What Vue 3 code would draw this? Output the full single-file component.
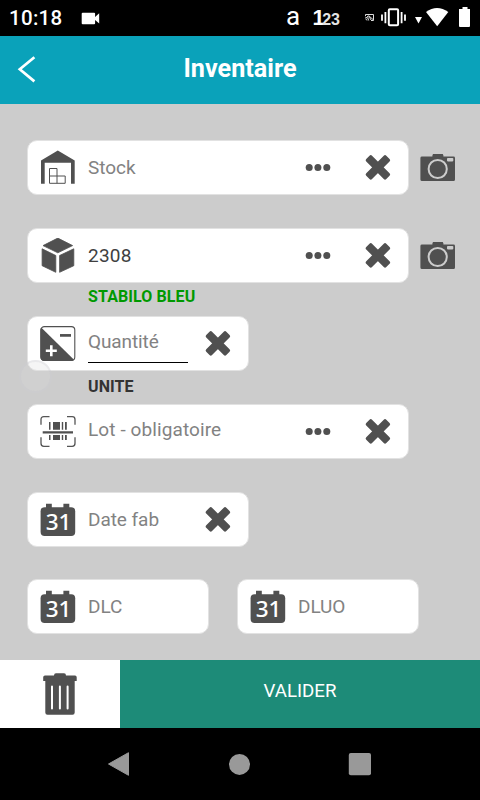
<script setup>
const rows = [
  { id: 'stock', fields: [{ icon: 'stock', text: 'Stock', size: 'wide', dots: true, clear: true }], camera: true },
  { id: 'article', fields: [{ icon: 'cube', text: '2308', filled: true, size: 'wide', dots: true, clear: true }], camera: true, note: 'STABILO BLEU', green: true },
  { id: 'quantity', fields: [{ icon: 'quantity', text: 'Quantité', size: 'medium', raised: true, underline: true, clear: true }], note: 'UNITE' },
  { id: 'lot', fields: [{ icon: 'barcode', text: 'Lot - obligatoire', size: 'wide', raised: true, dots: true, clear: true }] },
  { id: 'made', fields: [{ icon: 'calendar', text: 'Date fab', size: 'medium', clear: true }] },
  { id: 'expiry', fields: [{ icon: 'calendar', text: 'DLC', size: 'small' }, { icon: 'calendar', text: 'DLUO', size: 'small' }] },
]
</script>

<template>
  <div class="screen">
    <div class="status">
      <span class="clock">10:18</span>
      <svg class="status-icons" width="410" height="36" viewBox="70 0 410 36">
        <rect x="81.7" y="12.7" width="13.4" height="11.6" rx="1" fill="#fff" />
        <path d="M94.5 17.5 99.2 13.2V23.6L94.5 19.5Z" fill="#fff" />
        <text x="285.9" y="25" class="letter">a</text>
        <text x="312.4" y="25.3" class="digit-one">1</text>
        <text x="322.2" y="25" class="digits">23</text>
        <g fill="none" stroke="#ddd" stroke-width="1">
          <path d="M365.5 16V14.5H373.5V20.5H371M365.3 17.2A3.3 3.3 0 0 1 368.7 20.5M365.3 18.8A1.8 1.8 0 0 1 367 20.5M367 16.2A5 5 0 0 1 371 20M368.5 15.5 373 19.5" />
        </g>
        <rect x="388.8" y="9.2" width="9.3" height="16" rx="1" fill="none" stroke="#fff" stroke-width="2" />
        <path d="M385.4 12V23.2M401.6 12V23.2M382 14.5V20.8M405 14.5V20.8" stroke="#fff" stroke-width="1.8" fill="none" />
        <path d="M415 17H422L418.5 23.5Z" fill="#fff" />
        <path d="M426 12Q437 4 448.3 12L437.2 26.3Z" fill="#fff" />
        <path d="M462.5 7H467.5V9H470V26Q470 27 469 27H460Q459 27 459 26V9H462.5Z" fill="#fff" />
      </svg>
    </div>

    <header class="header">
      <svg class="back" width="20" height="30" viewBox="0 0 20 30">
        <path d="M17.4 3.2 2.8 15.2 17.4 27.4" fill="none" stroke="#fff" stroke-width="2.7" />
      </svg>
      <h1 class="title">Inventaire</h1>
    </header>

    <main class="form">
      <div v-for="row in rows" :key="row.id" class="row">
        <div class="line">
          <div v-for="field in row.fields" :key="field.text" class="field" :class="field.size">
            <svg class="icon" width="36" height="36" viewBox="0 0 36 36">
              <g v-if="field.icon === 'stock'">
                <path d="M17.8.6 34.7 10.6V33.8H31V12.8H4.7V33.8H1V10.6Z" fill="#505050" />
                <path d="M9.5 18.5H17V33.3M9.5 18.5V33.3H25.2V26H9.5" fill="none" stroke="#505050" stroke-width="1" />
              </g>
              <g v-else-if="field.icon === 'cube'" fill="#505050" stroke="#505050" stroke-width=".8" stroke-linejoin="round">
                <path d="M17.8.1 32.6 7.6 17.8 14.8 3 7.6Z" />
                <path d="M2.1 10.8 15.8 17.5V34.3L2.1 27.7Z" />
                <path d="M33.8 10.8 19.6 17.5V34.3L33.8 27.7Z" />
              </g>
              <g v-else-if="field.icon === 'quantity'">
                <rect x=".9" y=".6" width="33.9" height="33.9" rx="3.5" fill="#fff" stroke="#505050" stroke-width="1.1" />
                <path d="M1.2 1.5 34 33.8Q33 35 31 35H4.5Q.4 35 .4 31V4Q.4 2.5 1.2 1.5Z" fill="#505050" />
                <path d="M20 9.4H31" stroke="#505050" stroke-width="2.7" />
                <path d="M5.8 24.7H16.8M11.3 19.3V30.2" stroke="#fff" stroke-width="2.6" />
              </g>
              <g v-else-if="field.icon === 'barcode'">
                <path d="M9.5 2.7H3.8Q1 2.7 1 5.5V10.8M27 2.7H32.2Q35 2.7 35 5.5V10.8M1 23.3V29.2Q1 32.3 3.8 32.3H9.5M35 23.3V29.2Q35 32.3 32.2 32.3H27" fill="none" stroke="#555" stroke-width="1.3" />
                <path d="M9 8H10.5V15.8H9ZM13 8H20V15.8H13ZM21.8 8H23.2V15.8H21.8ZM25 8H26.8V15.8H25ZM9 21H10.5V26H9ZM13 21H20V26H13ZM21.8 21H23.2V26H21.8ZM25 21H26.8V26H25ZM2.7 17.3H33V19.6H2.7Z" fill="#505050" />
              </g>
              <g v-else>
                <rect x=".6" y="5.2" width="34.6" height="28.9" rx="4" fill="#505050" />
                <path d="M6 1.7H11.8V6H6ZM23.4 1.7H29.3V6H23.4Z" fill="#505050" />
                <text x="18.5" y="28.3" class="day">31</text>
              </g>
            </svg>
            <div class="value" :class="{ filled: field.filled, raised: field.raised, underline: field.underline }">{{ field.text }}</div>
            <svg v-if="field.dots" class="dots" width="28" height="8" viewBox="0 0 28 8">
              <circle cx="5.2" cy="3.5" r="3.5" /><circle cx="13.9" cy="3.5" r="3.5" /><circle cx="22.8" cy="3.5" r="3.5" />
            </svg>
            <svg v-if="field.clear" class="clear" width="28" height="28" viewBox="0 0 28 28">
              <g transform="translate(-.1 -.6) rotate(45 14 14)" fill="#505050">
                <rect x="-.2" y="9.9" width="28.4" height="8.2" rx="1.8" />
                <rect x="9.9" y="-.2" width="8.2" height="28.4" rx="1.8" />
              </g>
            </svg>
          </div>
          <svg v-if="row.camera" class="camera" width="36" height="30" viewBox="0 0 36 30">
            <path d="M12.4 3.4 13 2H22.8L23.4 3.4V4.6H33.5Q35 4.6 35 6V27.4Q35 29 33.5 29H2Q.4 29 .4 27.4V6Q.4 4.6 2 4.6H12.4Z" fill="#505050" />
            <circle cx="17.7" cy="17" r="9.1" fill="none" stroke="#ccc" stroke-width="2" />
            <rect x="27" y="6" width="6.3" height="3.4" rx=".8" fill="#ccc" />
          </svg>
        </div>
        <div v-if="row.note" class="note" :class="{ green: row.green }">{{ row.note }}</div>
      </div>
    </main>

    <div class="actions">
      <button class="delete" type="button">
        <svg width="36" height="44" viewBox="0 0 36 44">
          <path d="M12 3.6Q12 1.3 14 1.3H22Q24 1.3 24 3.6H33Q34.7 3.6 34.7 5.3V9H32.7V40.5Q32.7 42.8 30.5 42.8H5.5Q3.3 42.8 3.3 40.5V9H1.2V5.3Q1.2 3.6 3 3.6Z" fill="#505050" />
          <path d="M10 14.5V36.5M17.9 14.5V36.5M25.6 14.5V36.5" stroke="#fff" stroke-width="2" stroke-linecap="round" />
        </svg>
      </button>
      <button class="validate" type="button">VALIDER</button>
    </div>

    <nav class="nav">
      <svg width="24" height="26" viewBox="0 0 24 26"><path d="M1.5 13 21.5 1.7V24.3Z" fill="#999" stroke="#999" stroke-linejoin="round" /></svg>
      <svg width="24" height="26" viewBox="0 0 24 26"><circle cx="12.5" cy="13.4" r="10.5" fill="#999" /></svg>
      <svg width="24" height="26" viewBox="0 0 24 26"><rect x="1.8" y="2" width="22.2" height="22.3" rx="2" fill="#999" /></svg>
    </nav>

    <div class="touch"></div>
  </div>
</template>

<style>
body {
  margin: 0;
}
</style>

<style scoped>
.screen {
  position: relative;
  display: flex;
  flex-direction: column;
  width: 480px;
  height: 800px;
  overflow: hidden;
  background: #ccc;
  font-family: Roboto, "Liberation Sans", sans-serif;
}
svg {
  display: block;
  flex: none;
}
.status {
  display: flex;
  height: 36px;
  background: #000;
  color: #fff;
}
.clock {
  box-sizing: border-box;
  width: 70px;
  padding-left: 9px;
  line-height: 37px;
  font-size: 20.5px;
  font-weight: 500;
  letter-spacing: 0.3px;
}
.letter {
  fill: #fff;
  font: 26px/1 Roboto, sans-serif;
}
.digit-one {
  fill: #fff;
  font: bold 22px/1 "Liberation Sans", sans-serif;
  letter-spacing: -3px;
}
.digits {
  fill: #e4e4e4;
  font: bold 16px/1 "Liberation Sans", sans-serif;
}
.day {
  fill: #fff;
  font: 500 22.5px/1 "Noto Sans", sans-serif;
  text-anchor: middle;
}
.header {
  display: grid;
  grid-template-columns: 36px 1fr 36px;
  align-items: center;
  height: 68px;
  background: #0aa2ba;
}
.back {
  margin-left: 17px;
  margin-top: -2px;
}
.title {
  margin: 0;
  padding-bottom: 2px;
  text-align: center;
  color: #fff;
  font-size: 25.2px;
  line-height: 30px;
  font-weight: 700;
}
.form {
  box-sizing: border-box;
  height: 556px;
  padding: 36px 0 0 27px;
}
.row {
  height: 88px;
}
.row:nth-child(5) {
  height: 87.4px;
}
.line {
  display: flex;
  align-items: center;
  height: 55px;
}
.field {
  box-sizing: border-box;
  display: flex;
  align-items: center;
  height: 55px;
  padding-left: 12px;
  border: 1px solid #e2e2e2;
  border-radius: 10px;
  background: #fff;
}
.wide {
  width: 382px;
}
.medium {
  width: 222px;
}
.small {
  width: 182px;
}
.field + .field {
  margin-left: 28px;
}
.value {
  flex: 1;
  height: 53px;
  box-sizing: border-box;
  margin-left: 12px;
  line-height: 53px;
  font-size: 19px;
  letter-spacing: -0.05px;
  color: #828282;
  white-space: nowrap;
}
.filled {
  color: #404040;
  letter-spacing: 0.2px;
}
.raised {
  padding-bottom: 4px;
  line-height: 49px;
  letter-spacing: 0.1px;
}
.underline {
  height: 38px;
  margin-right: 3px;
  padding: 0;
  border-bottom: 1px solid #000;
  line-height: 34px;
  letter-spacing: -0.1px;
}
.dots {
  margin-right: 32px;
  fill: #505050;
}
.clear {
  margin-right: 16px;
}
.underline + .clear {
  margin-left: 13px;
}
.camera {
  margin-left: 11px;
  margin-bottom: 2px;
}
.note {
  padding-left: 61px;
  font-size: 16px;
  line-height: 28px;
  font-weight: 700;
  letter-spacing: 0.1px;
  color: #333;
}
.row:nth-child(3) .note {
  padding-top: 2px;
}
.green {
  color: #090;
}
.actions {
  display: flex;
  height: 68px;
}
button {
  border: 0;
  padding: 0;
  font-family: inherit;
}
.delete {
  display: flex;
  align-items: center;
  justify-content: center;
  width: 120px;
  background: #fff;
}
.validate {
  flex: 1;
  padding-bottom: 7px;
  background: #1d8b78;
  color: #fff;
  font-size: 18.7px;
}
.nav {
  display: flex;
  align-items: center;
  gap: 96px;
  box-sizing: border-box;
  height: 72px;
  padding-left: 107px;
  background: #000;
}
.touch {
  position: absolute;
  left: 19px;
  top: 360px;
  box-sizing: border-box;
  width: 33px;
  height: 33px;
  border: 2px solid rgba(190, 190, 200, 0.22);
  border-radius: 50%;
  background: rgba(220, 220, 220, 0.28);
}
</style>
